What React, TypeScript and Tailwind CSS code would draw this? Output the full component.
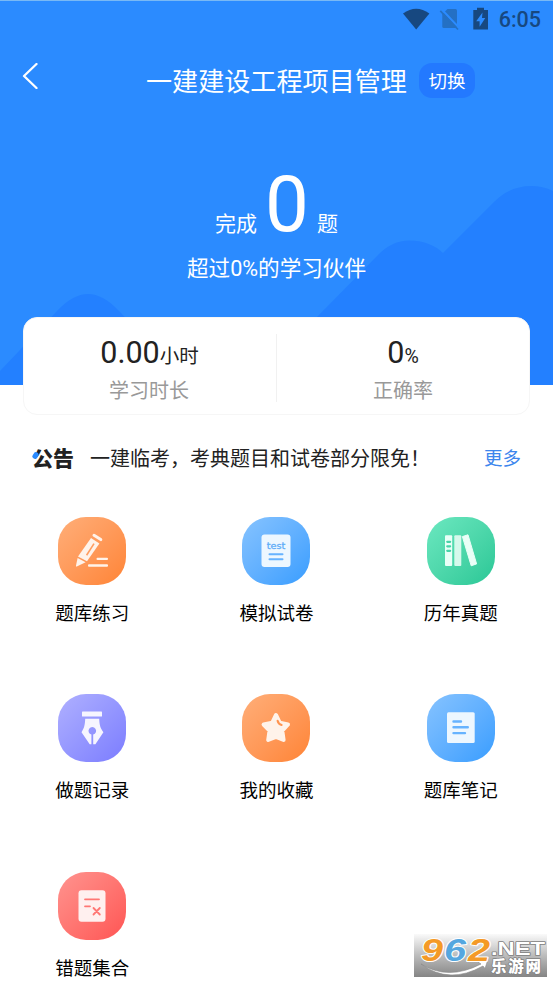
import type { ReactNode } from 'react'

type Tile = {
  label: string
  bg: string
  icon: ReactNode
}

const tiles: Tile[] = [
  {
    label: '题库练习',
    bg: 'from-[#ffae78] to-[#ff8434]',
    icon: (
      <svg viewBox="0 0 68 68" className="size-full" fill="#fff3ea">
        <path d="M36 18.3 42.8 22.6" stroke="#fff3ea" strokeWidth="3" strokeLinecap="round" />
        <path d="M33 21 41.4 26.6 29 44.2 20 39.6Z" />
        <path d="M36 26.6 28.6 38.2" stroke="#ff9d60" strokeWidth="1.6" />
        <path d="M19.6 41 27.6 45.2 18.8 49.6Q17.8 49.8 18 48.5Z" />
        <rect x="38.5" y="40.7" width="11.5" height="2.3" rx="1" />
        <rect x="30" y="47.3" width="20" height="2.5" rx="1" />
      </svg>
    ),
  },
  {
    label: '模拟试卷',
    bg: 'from-[#86c3ff] to-[#379dff]',
    icon: (
      <svg viewBox="0 0 68 68" className="size-full">
        <rect x="19.5" y="17.5" width="29" height="32.5" rx="3" fill="#edf7ff" />
        <text x="24.7" y="31.8" fontSize="9" textLength="18.6" lengthAdjust="spacingAndGlyphs" fill="#5fadf8" stroke="#5fadf8" strokeWidth=".3" className="font-['DejaVu_Sans',sans-serif]">
          test
        </text>
        <rect x="26.5" y="36.3" width="15" height="2" rx="1" fill="#66b3ff" />
        <rect x="26.5" y="41.3" width="15" height="2" rx="1" fill="#66b3ff" />
      </svg>
    ),
  },
  {
    label: '历年真题',
    bg: 'from-[#6be8c0] to-[#27c796]',
    icon: (
      <svg viewBox="0 0 68 68" className="size-full" fill="#e9fff7">
        <rect x="18" y="18.2" width="7.2" height="30.8" rx="1" />
        <rect x="27.3" y="18.2" width="7" height="30.8" rx="1" fill="#d6f9ec" />
        <path d="M35.4 19.6 41 17.8 49.6 46.9 44.2 48.8Z" stroke="#e9fff7" strokeWidth="1" strokeLinejoin="round" />
        <path d="M20.3 24.8h2.8M20.3 29.3h2.8M20.3 33.8h2.8" stroke="#47d3a8" strokeWidth="2.3" strokeLinecap="round" />
      </svg>
    ),
  },
  {
    label: '做题记录',
    bg: 'from-[#b0b0ff] to-[#7c7cff]',
    icon: (
      <svg viewBox="0 0 68 68" className="size-full" fill="#f6f5ff">
        <rect x="24" y="17.6" width="20" height="5" rx=".6" />
        <path d="M27.2 24.8H41.2C41.4 31 42.5 34.5 45.4 38.2L37.4 50.3H35.2V40.6A3.8 3.8 0 1 0 33.4 40.6V50.3H31.7L23.5 38.2C26 34.5 27 31 27.2 24.8Z" />
      </svg>
    ),
  },
  {
    label: '我的收藏',
    bg: 'from-[#ffae78] to-[#ff8434]',
    icon: (
      <svg viewBox="0 0 68 68" className="size-full">
        <path
          d="M34 21 37.8 28.8 46 30.5 40.3 36.7 41.6 46 34 42.8 26.2 46 27.5 36.7 21.6 30.5 30.2 28.8Z"
          fill="#fff3ea"
          stroke="#fff3ea"
          strokeWidth="4"
          strokeLinejoin="round"
        />
        <path d="M35.6 26.8Q36.3 30 39.6 31" fill="none" stroke="#ff9450" strokeWidth="2.1" strokeLinecap="round" />
      </svg>
    ),
  },
  {
    label: '题库笔记',
    bg: 'from-[#86c3ff] to-[#379dff]',
    icon: (
      <svg viewBox="0 0 68 68" className="size-full">
        <rect x="20" y="18.3" width="27.7" height="30.7" rx="1.5" fill="#edf7ff" />
        <path d="M26.5 27.5h7.5M26.5 33.3h14.3M26.5 39.1h11.5" stroke="#66b3ff" strokeWidth="2.4" strokeLinecap="round" />
      </svg>
    ),
  },
  {
    label: '错题集合',
    bg: 'from-[#ff938f] to-[#ff5353]',
    icon: (
      <svg viewBox="0 0 68 68" className="size-full">
        <rect x="20.5" y="18.3" width="27" height="31.5" rx="3" fill="#fff0ef" />
        <path d="M27 27.3h14M27 34.3h5M35.5 36l6.3 6.5M41.8 36l-6.3 6.5" stroke="#ff7774" strokeWidth="1.8" strokeLinecap="round" />
      </svg>
    ),
  },
]

function StatusBar() {
  return (
    <div className="relative flex h-[37px] items-center justify-end pr-3 text-[#174880]">
      <svg viewBox="0 0 92 26" className="mr-1 h-[26px] w-[92px]" fill="currentColor">
        <path d="M0 6.5Q13.2-3.2 26.4 6.5L13.2 22.5Z" />
        <path d="M44.5 2H52.5Q54 2 54 3.5V19.5Q54 21 52.5 21H40.8Q39.3 21 39.3 19.5V7.2Z" fill="#2470c4" />
        <path d="M38.8 2.5 56.5 21.2" stroke="#2b8bff" strokeWidth="2" />
        <path d="M37.3 3.8 55 22.5" stroke="#2470c4" strokeWidth="1.7" />
        <path fillRule="evenodd" d="M74 2.9V.8H81V2.9H85V22.5H70.3V2.9ZM79.5 5.6 73.2 14.3H76.6V19.8L82.3 11.1H79Z" />
      </svg>
      <span className="pt-px font-[Roboto,sans-serif] text-[21.5px] leading-6 font-medium">6:05</span>
    </div>
  )
}

function Hills() {
  return (
    <svg viewBox="0 0 553 384" className="absolute inset-0 h-[384px] w-full" fill="#2380ff">
      <path d="M0 370 57 310Q73 293 88 293T119 310L190 384H0Z" />
      <path d="M250 384 378 254Q392 239.5 409 239.5Q430 239.5 443 252L494 201Q510 185 531 185Q543 185 553 190V384Z" />
    </svg>
  )
}

function Watermark() {
  return (
    <div className="absolute right-1.5 bottom-1.5 h-[43px] w-[133px] bg-linear-to-b from-[#fafafa] via-[#bcbcbc] to-[#858585]">
      <svg viewBox="0 0 133 43" className="size-full overflow-visible">
        <path d="M7 30Q34 47 67 30L64 28 74 25.5 71 34.5 69 32Q35 51 7 30Z" fill="#fff" stroke="#888" strokeWidth=".6" />
        <g fontWeight="900" strokeLinejoin="round" paintOrder="stroke" stroke="#fff" className="font-['Liberation_Sans','Noto_Sans_CJK_SC',sans-serif]">
          <g fontSize="32" fontStyle="italic" strokeWidth="2">
            <text x="7" y="26.5" textLength="22" lengthAdjust="spacingAndGlyphs" fill="#f49a26">9</text>
            <text x="30" y="26.5" textLength="22" lengthAdjust="spacingAndGlyphs" fill="#55a7df">6</text>
            <text x="54" y="26.5" textLength="22" lengthAdjust="spacingAndGlyphs" fill="#f49a26">2</text>
          </g>
          <g fill="#fff" stroke="#808080" strokeWidth="1.5">
            <text x="77" y="21" fontSize="18.5" textLength="54" lengthAdjust="spacingAndGlyphs">.NET</text>
            <text x="77" y="37.5" fontSize="15.5" textLength="50">乐游网</text>
          </g>
        </g>
      </svg>
    </div>
  )
}

export default function App() {
  return (
    <div className="relative h-[983px] w-full overflow-hidden bg-white font-[Roboto,'Noto_Sans_CJK_SC',sans-serif]">
      {/* Header */}
      <header className="relative h-[384px] border-t border-[#79b9f5] bg-[#2b8bff] text-white">
        <Hills />
        <StatusBar />
        <div className="relative flex h-[84px] items-center">
          <svg viewBox="0 0 16 26" className="mb-2 ml-[22px] h-[26px] w-4" fill="none" stroke="white" strokeWidth="2.3" strokeLinecap="round" strokeLinejoin="round">
            <path d="M14.5 1 2 13 14.5 25" />
          </svg>
          <h1 className="ml-[108px] pt-1 text-[26.1px] leading-9">一建建设工程项目管理</h1>
          <button className="ml-3 h-[35px] w-14 rounded-[13px] bg-[#2379ff] pt-[3px] text-[18.5px] leading-[32px]">切换</button>
        </div>
        <div className="relative mt-[38px] flex h-[89px] items-baseline justify-center text-[21px]">
          <span>完成</span>
          <span className="mx-2 text-[78px] leading-[90px]">0</span>
          <span>题</span>
        </div>
        <p className="relative mt-1 text-center text-[21.6px] leading-8">超过0%的学习伙伴</p>
      </header>

      {/* Stats */}
      <section className="relative mx-[23px] -mt-[67px] flex h-[98px] rounded-[14px] border border-[#f6f6f6] bg-white pt-4 pb-3 text-center">
        <div className="flex-1 border-r border-[#f1f1f1]">
          <p className="pt-px pr-px text-[30.5px] leading-9 text-[#222]">0.00<span className="text-[19.5px]">小时</span></p>
          <p className="pr-0.5 text-[20px] leading-8 text-[#999]">学习时长</p>
        </div>
        <div className="flex-1">
          <p className="pt-px text-[30.5px] leading-9 text-[#222]">0<span className="text-[19.5px]">%</span></p>
          <p className="text-[20px] leading-8 text-[#999]">正确率</p>
        </div>
      </section>

      {/* Notice */}
      <section className="flex h-[86px] items-center px-8 pt-px">
        <span className="relative text-[21px] leading-7 font-black text-[#222]">
          公告
          <i className="absolute top-[7px] left-px h-[7px] w-[5px] rotate-30 rounded-sm bg-[#2b8bff]" />
        </span>
        <span className="ml-4 text-[20px] whitespace-nowrap text-[#222]">一建临考，考典题目和试卷部分限免！</span>
        <a className="ml-auto pt-0.5 text-[18.5px] whitespace-nowrap text-[#3d86ed]">更多</a>
      </section>

      {/* Menu */}
      <main className="mt-4 grid grid-cols-3 gap-y-[65.3px]">
        {tiles.map(tile => (
          <div key={tile.label} className="flex h-28 flex-col items-center">
            <div className={`size-[68px] shrink-0 rounded-[28px] bg-linear-to-br ${tile.bg}`}>{tile.icon}</div>
            <span className="mt-[15px] text-[18.5px] leading-7 text-black">{tile.label}</span>
          </div>
        ))}
      </main>

      <Watermark />
    </div>
  )
}
